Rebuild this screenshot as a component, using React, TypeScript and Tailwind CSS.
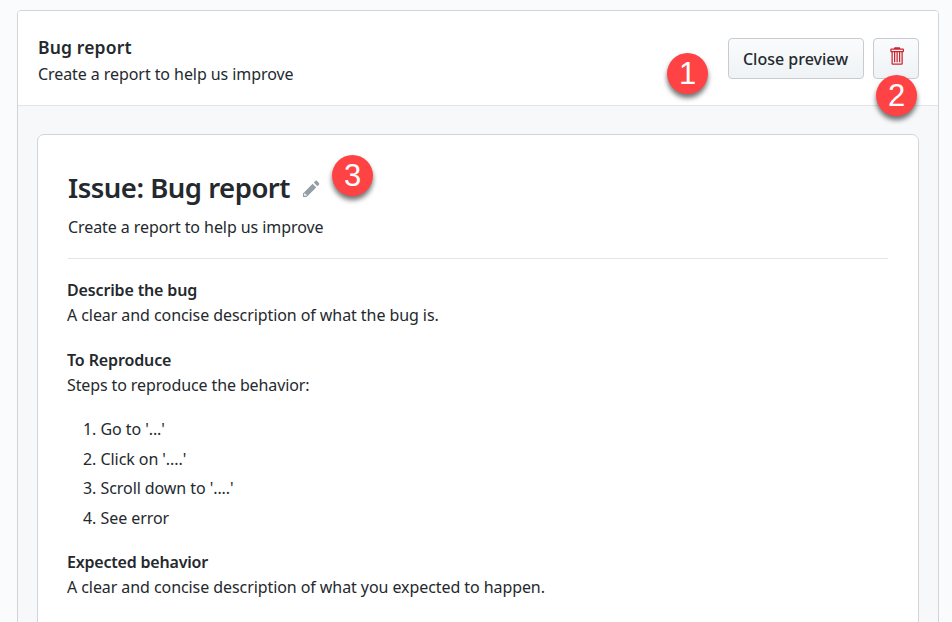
import React from "react";

function Line({ children, className = "" }: { children: React.ReactNode; className?: string }) {
  return <div className={"whitespace-nowrap h-[25px] leading-[25px] " + className}>{children}</div>;
}

function Badge({ n, className }: { n: number; className: string }) {
  return (
    <span
      className={
        "absolute flex h-[41px] w-[41px] items-center justify-center rounded-full bg-[#ff4244] font-['Liberation_Sans',sans-serif] text-[31px] leading-none tracking-normal text-white shadow-[0_4px_5px_rgba(0,0,0,0.55)] " +
        className
      }
    >
      {n}
    </span>
  );
}

function TrashIcon() {
  return (
    <svg className="h-[20px] w-[15px]" viewBox="0 0 12 16" fill="#cb2431">
      <path
        fillRule="evenodd"
        d="M11 2H9c0-.55-.45-1-1-1H5c-.55 0-1 .45-1 1H2c-.55 0-1 .45-1 1v1c0 .55.45 1 1 1v9c0 .55.45 1 1 1h7c.55 0 1-.45 1-1V5c.55 0 1-.45 1-1V3c0-.55-.45-1-1-1zm-1 12H3V5h1v8h1V5h1v8h1V5h1v8h1V5h1v9zm1-10H2V3h9v1z"
      />
    </svg>
  );
}

function PencilIcon() {
  return (
    <svg className="h-[19.2px] w-[16.8px]" viewBox="0 0 14 16" fill="#959da5">
      <path
        fillRule="evenodd"
        d="M0 12v3h3l8-8-3-3-8 8zm3 2H1v-2h1v1h1v1zm10.3-9.3L12 6 9 3l1.3-1.3a.996.996 0 0 1 1.41 0l1.59 1.59c.39.39.39 1.02 0 1.41z"
      />
    </svg>
  );
}

const steps = ["Go to '...'", "Click on '....'", "Scroll down to '....'", "See error"];

export default function App() {
  return (
    <div className="relative h-[622px] w-[952px] overflow-hidden bg-[#fafbfc] pl-[17px] pt-[10px] font-['Noto_Sans',sans-serif] text-[16px] tracking-[-0.075px] text-[#24292e]">
      <div className="h-[640px] w-[922px] overflow-hidden rounded-t-[4px] border border-[#d1d5da] bg-[#f6f8fa]">
        <header className="flex h-[95px] justify-between border-b border-[#e1e4e8] bg-white pl-5 pr-[19px] pt-[24px]">
          <div>
            <Line className="text-[17.5px] font-semibold tracking-[0.15px]">Bug report</Line>
            <Line className="mt-[2px]">Create a report to help us improve</Line>
          </div>
          <div className="mt-[3px] flex gap-[9px]">
            <button className="flex h-[41px] w-[136px] items-center justify-center whitespace-nowrap rounded-[4px] border border-[#c8ccd0] bg-linear-to-b from-[#fafbfc] to-[#eff3f6] pr-px text-[16px] font-medium tracking-normal">
              Close preview
            </button>
            <button className="flex h-[41px] w-[46px] justify-center rounded-[4px] border border-[#c8ccd0] bg-linear-to-b from-[#fafbfc] to-[#eff3f6] pt-[7px]">
              <TrashIcon />
            </button>
          </div>
        </header>
        <main className="ml-[19px] mt-[28px] h-[520px] w-[882px] rounded-t-[7px] border border-[#d1d5da] bg-white pl-[29px] pr-[30px] pt-[33px]">
          <div className="ml-px flex h-[40px] items-center">
            <h1 className="w-[222px] whitespace-nowrap text-[27.5px] font-semibold leading-[40px] tracking-[-0.5px]">Issue: Bug report</h1>
            <span className="ml-[13px] mt-[2px]">
              <PencilIcon />
            </span>
          </div>
          <Line className="ml-px mt-[7px]">Create a report to help us improve</Line>
          <hr className="ml-px mt-[18px] border-[#e1e4e8]" />
          <section className="mt-[19px]">
            <Line className="font-semibold tracking-[-0.15px]">Describe the bug</Line>
            <Line>A clear and concise description of what the bug is.</Line>
          </section>
          <section className="mt-[20px]">
            <Line className="font-semibold tracking-[-0.12px]">To Reproduce</Line>
            <Line className="tracking-[-0.11px]">Steps to reproduce the behavior:</Line>
          </section>
          <ol className="mt-[19px] flex flex-col gap-[4.6px] pl-[16px]">
            {steps.map((s, i) => (
              <li key={s} className="flex">
                <Line className="w-[17.5px]">{i + 1}.</Line>
                <Line>{s}</Line>
              </li>
            ))}
          </ol>
          <section className="mt-[19px]">
            <Line className="font-semibold tracking-[-0.2px]">Expected behavior</Line>
            <Line>A clear and concise description of what you expected to happen.</Line>
          </section>
        </main>
      </div>
      <Badge n={1} className="left-[667px] top-[53px]" />
      <Badge n={2} className="left-[876px] top-[75px]" />
      <Badge n={3} className="left-[332px] top-[155px]" />
    </div>
  );
}
